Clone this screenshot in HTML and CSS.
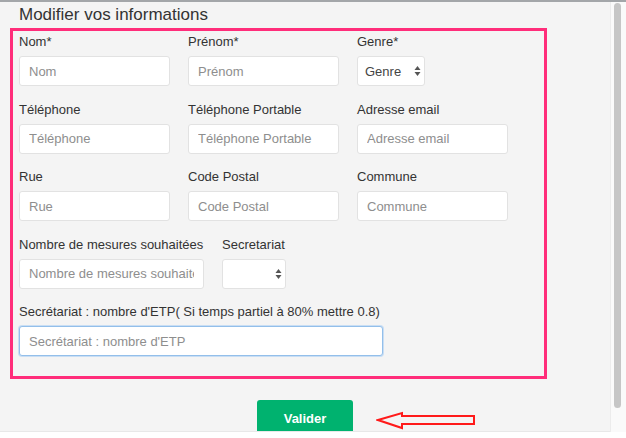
FILE: index.html
```html
<!DOCTYPE html>
<html lang="fr">
<head>
<meta charset="utf-8">
<title>Modifier vos informations</title>
<link rel="stylesheet" href="styles.css">
</head>
<body>
<div class="window">
  <div class="main">
    <h1 class="title">Modifier vos informations</h1>
    <div class="box">
      <div class="row">
        <div class="field w151"><label>Nom*</label><input class="input" placeholder="Nom"></div>
        <div class="field w151"><label>Prénom*</label><input class="input" placeholder="Prénom"></div>
        <div class="field"><label>Genre*</label>
          <div class="select w68"><span>Genre</span>
            <svg class="updown" width="7" height="12" viewBox="0 0 7 12"><path d="M3.5 1 L6.5 5 L0.5 5 Z M3.5 11 L6.5 7 L0.5 7 Z" fill="#555"/></svg>
          </div>
        </div>
      </div>
      <div class="row">
        <div class="field w151"><label>Téléphone</label><input class="input" placeholder="Téléphone"></div>
        <div class="field w151"><label>Téléphone Portable</label><input class="input" placeholder="Téléphone Portable"></div>
        <div class="field w151"><label>Adresse email</label><input class="input" placeholder="Adresse email"></div>
      </div>
      <div class="row">
        <div class="field w151"><label>Rue</label><input class="input" placeholder="Rue"></div>
        <div class="field w151"><label>Code Postal</label><input class="input" placeholder="Code Postal"></div>
        <div class="field w151"><label>Commune</label><input class="input" placeholder="Commune"></div>
      </div>
      <div class="row">
        <div class="field w185"><label>Nombre de mesures souhaitées</label><input class="input" placeholder="Nombre de mesures souhaitées"></div>
        <div class="field"><label>Secretariat</label>
          <div class="select w64"><span></span>
            <svg class="updown" width="7" height="12" viewBox="0 0 7 12"><path d="M3.5 1 L6.5 5 L0.5 5 Z M3.5 11 L6.5 7 L0.5 7 Z" fill="#555"/></svg>
          </div>
        </div>
      </div>
      <div class="row">
        <div class="field w364"><label>Secrétariat : nombre d'ETP( Si temps partiel à 80% mettre 0.8)</label><input class="input focus" placeholder="Secrétariat : nombre d'ETP"></div>
      </div>
    </div>
    <div class="footer">
      <div class="btn-wrap">
        <button class="btn">Valider</button>
        <svg class="arrow" width="100" height="20" viewBox="0 0 100 20"><path d="M2 9 L26 2 L26 5 L98 5 L98 13 L26 13 L26 17 Z" fill="none" stroke="#ff1a1a" stroke-width="2" stroke-linejoin="miter"/></svg>
      </div>
    </div>
  </div>
  <div class="scroll"><div class="thumb"></div></div>
</div>
</body>
</html>
```

FILE: styles.css
```css
* { box-sizing: border-box; }
html, body { margin: 0; padding: 0; background: #ffffff; }
body {
  font-family: "Liberation Sans", Arial, sans-serif;
  color: #333333;
  width: 626px;
  height: 438px;
  overflow: hidden;
}
.window {
  display: flex;
  height: 432px;
  border-top: 2px solid #a3a6a9;
}
.main {
  flex: 1;
  background: #f4f4f4;
  overflow: hidden;
  border-bottom: 1px solid #e8e8e8;
}
.title {
  margin: 0;
  padding: 3px 0 0 19px;
  height: 26px;
  font-size: 17px;
  line-height: 20px;
  font-weight: normal;
  color: #333333;
}
.box {
  margin-left: 10px;
  width: 537px;
  border: 3px solid #ff2d7a;
  padding: 3px 0 20px 6px;
}
.row {
  display: flex;
  gap: 18px;
}
.row + .row { margin-top: 15.5px; }
.field {
  display: flex;
  flex-direction: column;
}
.field label {
  font-size: 13px;
  line-height: 15px;
  height: 15px;
  margin-bottom: 7px;
  white-space: nowrap;
  color: #333333;
}
.w151 { width: 151px; }
.w185 { width: 185px; }
.w364 { width: 364px; }
.w68 { width: 68px; }
.w64 { width: 64px; }
.input {
  height: 30px;
  width: 100%;
  border: 1px solid #e2e2e2;
  border-radius: 3px;
  background: #ffffff;
  padding: 0 9px;
  font-family: "Liberation Sans", Arial, sans-serif;
  font-size: 13px;
  color: #333333;
  outline: none;
}
.input::placeholder { color: #8e8e8e; }
.focus {
  border-color: #93bfea;
  box-shadow: 0 0 0 1px #c9def4;
}
.select {
  height: 30px;
  border: 1px solid #e2e2e2;
  border-radius: 3px;
  background: #ffffff;
  display: flex;
  align-items: center;
  justify-content: space-between;
  padding: 0 3px 0 7px;
  font-size: 13px;
  color: #444444;
}
.updown { display: block; }
.footer {
  display: flex;
  justify-content: center;
  margin-top: 21px;
}
.btn-wrap { position: relative; }
.btn {
  display: block;
  width: 96px;
  height: 36px;
  border: none;
  border-radius: 3px;
  background: #00b26f;
  color: #ffffff;
  font-family: "Liberation Sans", Arial, sans-serif;
  font-size: 13px;
  font-weight: bold;
  padding: 0;
}
.arrow {
  position: absolute;
  left: 119px;
  top: 11px;
}
.scroll {
  width: 16px;
  background: #fafafa;
  border-left: 1px solid #ececec;
  padding: 1px 0 0 3px;
}
.thumb {
  width: 7px;
  height: 405px;
  background: #c6c6c6;
  border-radius: 4px;
}
```
